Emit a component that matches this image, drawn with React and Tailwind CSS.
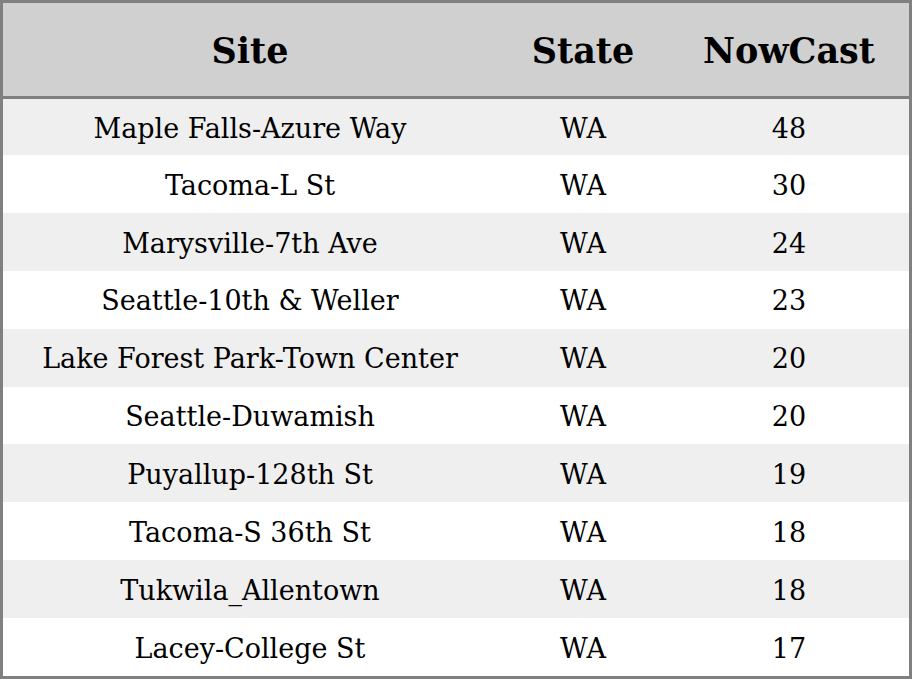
const rows = [
  ["Maple Falls-Azure Way", "WA", 48],
  ["Tacoma-L St", "WA", 30],
  ["Marysville-7th Ave", "WA", 24],
  ["Seattle-10th & Weller", "WA", 23],
  ["Lake Forest Park-Town Center", "WA", 20],
  ["Seattle-Duwamish", "WA", 20],
  ["Puyallup-128th St", "WA", 19],
  ["Tacoma-S 36th St", "WA", 18],
  ["Tukwila_Allentown", "WA", 18],
  ["Lacey-College St", "WA", 17],
];

export default function App() {
  return (
    <div
      className="w-[912px] h-[679px] border-[3px] border-[#808080] bg-white text-black flex flex-col"
      style={{ fontFamily: '"DejaVu Serif", serif' }}
    >
      {/* header */}
      <div className="h-[96px] shrink-0 bg-[#d0d0d0] border-b-[3px] border-[#808080] flex items-center pt-1 text-[35px] font-bold">
        <div className="w-[494px] text-center">Site</div>
        <div className="w-[172px] text-center">State</div>
        <div className="flex-1 text-center">NowCast</div>
      </div>

      {/* rows */}
      {rows.map((r, i) => (
        <div
          key={i}
          className={
            "flex items-center pt-1 text-[27px] " +
            (i === 0 ? "h-[56px] shrink-0 " : "flex-1 ") +
            (i % 2 === 0 ? "bg-[#efefef]" : "bg-white")
          }
        >
          <div className="w-[494px] text-center whitespace-nowrap">{r[0]}</div>
          <div className="w-[172px] text-center">{r[1]}</div>
          <div className="flex-1 text-center">{r[2]}</div>
        </div>
      ))}
    </div>
  );
}
